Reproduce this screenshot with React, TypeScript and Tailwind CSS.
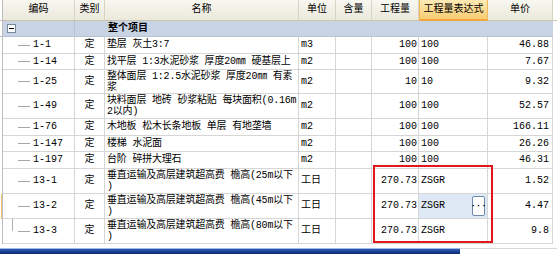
import React from "react";

type Row = {
  code: string;
  kind: string;
  name: string[];
  unit: string;
  qty: string;
  expr: string;
  price: string;
  h: string;
  current?: boolean;
};

const rows: Row[] = [
  { code: "1-1", kind: "定", name: ["垫层 灰土3:7"], unit: "m3", qty: "100", expr: "100", price: "46.88", h: "h-[17px]" },
  { code: "1-14", kind: "定", name: ["找平层 1:3水泥砂浆 厚度20㎜ 硬基层上"], unit: "m2", qty: "100", expr: "100", price: "7.67", h: "h-[16px]" },
  { code: "1-25", kind: "定", name: ["整体面层 1:2.5水泥砂浆 厚度20㎜ 有素", "浆"], unit: "m2", qty: "10", expr: "10", price: "9.32", h: "h-[24px]" },
  { code: "1-49", kind: "定", name: ["块料面层 地砖 砂浆粘贴 每块面积(0.16m", "2以内)"], unit: "m2", qty: "100", expr: "100", price: "52.57", h: "h-[25px]" },
  { code: "1-76", kind: "定", name: ["木地板 松木长条地板 单层 有地垄墙"], unit: "m2", qty: "100", expr: "100", price: "166.11", h: "h-[17px]" },
  { code: "1-147", kind: "定", name: ["楼梯 水泥面"], unit: "m2", qty: "100", expr: "100", price: "26.26", h: "h-[16px]" },
  { code: "1-197", kind: "定", name: ["台阶 碎拼大理石"], unit: "m2", qty: "100", expr: "100", price: "46.31", h: "h-[17px]" },
  { code: "13-1", kind: "定", name: ["垂直运输及高层建筑超高费 檐高(25m以下", ")"], unit: "工日", qty: "270.73", expr: "ZSGR", price: "1.52", h: "h-[25px]" },
  { code: "13-2", kind: "定", name: ["垂直运输及高层建筑超高费 檐高(45m以下", ")"], unit: "工日", qty: "270.73", expr: "ZSGR", price: "4.47", h: "h-[25px]", current: true },
  { code: "13-3", kind: "定", name: ["垂直运输及高层建筑超高费 檐高(80m以下", ")"], unit: "工日", qty: "270.73", expr: "ZSGR", price: "9.8", h: "h-[25px]" },
];

const grid = "grid grid-cols-[3px_72px_30px_194px_37px_36px_47px_69px_65px_4px]";
const cell = "border-r border-b border-[#d6d6d6] flex items-center overflow-hidden whitespace-nowrap";
const head = "border-r border-b border-r-[#d8d4c4] border-b-[#c8c4b2] flex items-center justify-center whitespace-nowrap";

export default function App() {
  return (
    <div className="relative w-[557px] h-[254px] overflow-hidden bg-white text-[10px] leading-[12px] text-black font-['Liberation_Mono','Noto_Sans_CJK_SC',monospace]">
      {/* header */}
      <div className={`${grid} h-[21px] bg-gradient-to-b from-[#f8f7f1] to-[#ebe8da]`}>
        <div className="border-r border-b border-[#bdbdbd] bg-white" />
        <div className={head}>编码</div>
        <div className={head}>类别</div>
        <div className={head}>名称</div>
        <div className={head}>单位</div>
        <div className={head}>含量</div>
        <div className={head}>工程量</div>
        <div className="flex items-center justify-center border-x border-b-2 border-x-[#f0b85a] border-b-[#f1a63a] bg-gradient-to-b from-[#fdeab4] to-[#f8cc72]">
          工程量表达式
        </div>
        <div className={head}>单价</div>
        <div className="border-b border-[#c8c4b2] bg-white" />
      </div>

      {/* group row */}
      <div className={`${grid} h-[16px] bg-[#c8d4e4]`}>
        <div className="border-r border-b border-[#bdbdbd] bg-white" />
        <div className="border-r border-b border-r-[#b7c3d5] border-b-[#b7c3d5] flex items-center pl-[4px]">
          <span className="flex h-[9px] w-[9px] items-center justify-center border border-[#7a8a9e] bg-white">
            <span className="h-px w-[5px] bg-black" />
          </span>
        </div>
        <div className="border-b border-[#b7c3d5]" />
        <div className="border-b border-[#b7c3d5] flex items-center pl-[3px] font-bold">整个项目</div>
        <div className="border-b border-[#b7c3d5]" />
        <div className="border-b border-[#b7c3d5]" />
        <div className="border-b border-[#b7c3d5]" />
        <div className="border-b border-[#b7c3d5]" />
        <div className="border-b border-[#b7c3d5]" />
        <div className="bg-white" />
      </div>

      {rows.map((r, i) => (
        <div key={r.code} className={`${grid} ${r.h}`}>
          <div className="border-r border-[#bdbdbd] bg-white flex">
            {r.current && <span className="ml-px w-[2px] bg-[#f3c173]" />}
          </div>
          <div className={`${cell} relative pl-[15px]`}>
            {i === rows.length - 1 && <span className="absolute left-[9px] top-0 h-1/2 w-px bg-[#b0b0b0]" />}
            <span className="h-px w-[12px] bg-[#a8a8a8]" />
            <span className="ml-[3px]">{r.code}</span>
          </div>
          <div className={`${cell} justify-center`}>{r.kind}</div>
          <div className={`${cell} pl-[2px] tracking-[-0.2px]`}>
            <div className={r.name.length > 1 ? "leading-[11px]" : ""}>
              {r.name.map((l) => (
                <div key={l}>{l}</div>
              ))}
            </div>
          </div>
          <div className={`${cell} pl-[2px]`}>{r.unit}</div>
          <div className={cell} />
          <div className={`${cell} justify-end pr-[1px]`}>{r.qty}</div>
          <div className={`${cell} pl-[2px] ${r.current ? "bg-[#dfe8f5]" : ""}`}>
            <span>{r.expr}</span>
            {r.current && (
              <span className="ml-auto mr-[2px] flex h-[20px] w-[13px] items-center justify-center rounded-[2px] border border-[#6f8aa8] bg-white text-[9px] font-bold leading-none">
                ···
              </span>
            )}
          </div>
          <div className={`${cell} justify-end pr-[3px]`}>{r.price}</div>
          <div className="bg-white" />
        </div>
      ))}

      {/* bottom strip */}
      <div className="h-[4px] bg-white" />
      <div className="flex h-[6px]">
        <div className="w-[460px] border-t border-[#9fb8e6] bg-gradient-to-b from-[#2f5cb8] to-[#0c2770]" />
        <div className="flex-1 border-t border-[#d8d8d8] bg-white" />
      </div>

      {/* annotation */}
      <div className="pointer-events-none absolute left-[373px] top-[165px] h-[78px] w-[120px] border-2 border-[#e3161d]" />
    </div>
  );
}
